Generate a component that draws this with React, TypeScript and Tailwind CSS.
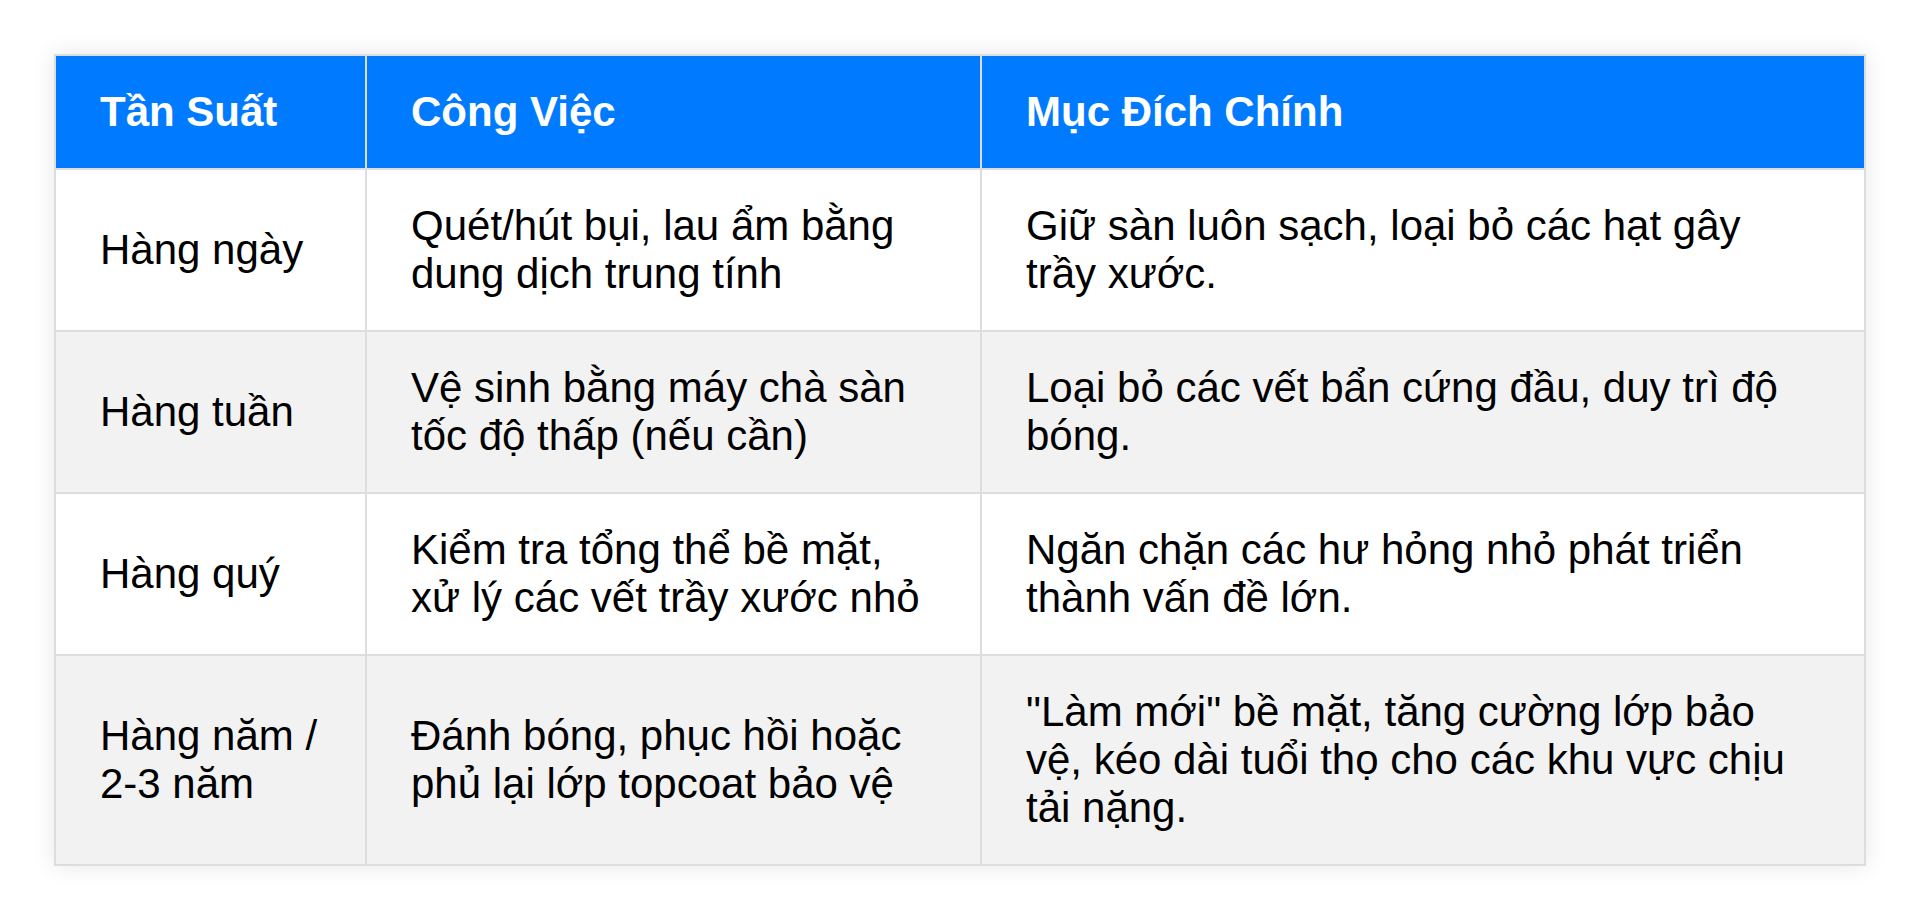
const rows = [
  {
    freq: "Hàng ngày",
    task: "Quét/hút bụi, lau ẩm bằng dung dịch trung tính",
    goal: "Giữ sàn luôn sạch, loại bỏ các hạt gây trầy xước.",
  },
  {
    freq: "Hàng tuần",
    task: "Vệ sinh bằng máy chà sàn tốc độ thấp (nếu cần)",
    goal: "Loại bỏ các vết bẩn cứng đầu, duy trì độ bóng.",
  },
  {
    freq: "Hàng quý",
    task: "Kiểm tra tổng thể bề mặt, xử lý các vết trầy xước nhỏ",
    goal: "Ngăn chặn các hư hỏng nhỏ phát triển thành vấn đề lớn.",
  },
  {
    freq: "Hàng năm / 2-3 năm",
    task: "Đánh bóng, phục hồi hoặc phủ lại lớp topcoat bảo vệ",
    goal: "\"Làm mới\" bề mặt, tăng cường lớp bảo vệ, kéo dài tuổi thọ cho các khu vực chịu tải nặng.",
  },
];

export default function App() {
  return (
    <div className="min-h-[920px] w-full bg-white pl-[54px] pt-[54px] font-['Liberation_Sans',Arial,sans-serif]">
      <table className="w-[1812px] table-fixed border-collapse border-2 border-[#dddddd] text-[42px] leading-[48px] text-black shadow-[0_0_22px_rgba(0,0,0,0.1)]">
        <colgroup>
          <col className="w-[311px]" />
          <col className="w-[615px]" />
          <col />
        </colgroup>
        <thead>
          <tr className="bg-[#007bff] text-white">
            <th className="border-2 border-[#dddddd] px-[44px] py-[32px] text-left font-bold">Tần Suất</th>
            <th className="border-2 border-[#dddddd] px-[44px] py-[32px] text-left font-bold">Công Việc</th>
            <th className="border-2 border-[#dddddd] px-[44px] py-[32px] text-left font-bold">Mục Đích Chính</th>
          </tr>
        </thead>
        <tbody>
          {rows.map((r, i) => (
            <tr key={r.freq} className={i % 2 === 1 ? "bg-[#f2f2f2]" : "bg-white"}>
              <td className="border-2 border-[#dddddd] px-[44px] py-[32px] align-middle">{r.freq}</td>
              <td className="border-2 border-[#dddddd] px-[44px] py-[32px] align-middle">{r.task}</td>
              <td className="border-2 border-[#dddddd] px-[44px] py-[32px] align-middle">{r.goal}</td>
            </tr>
          ))}
        </tbody>
      </table>
    </div>
  );
}
